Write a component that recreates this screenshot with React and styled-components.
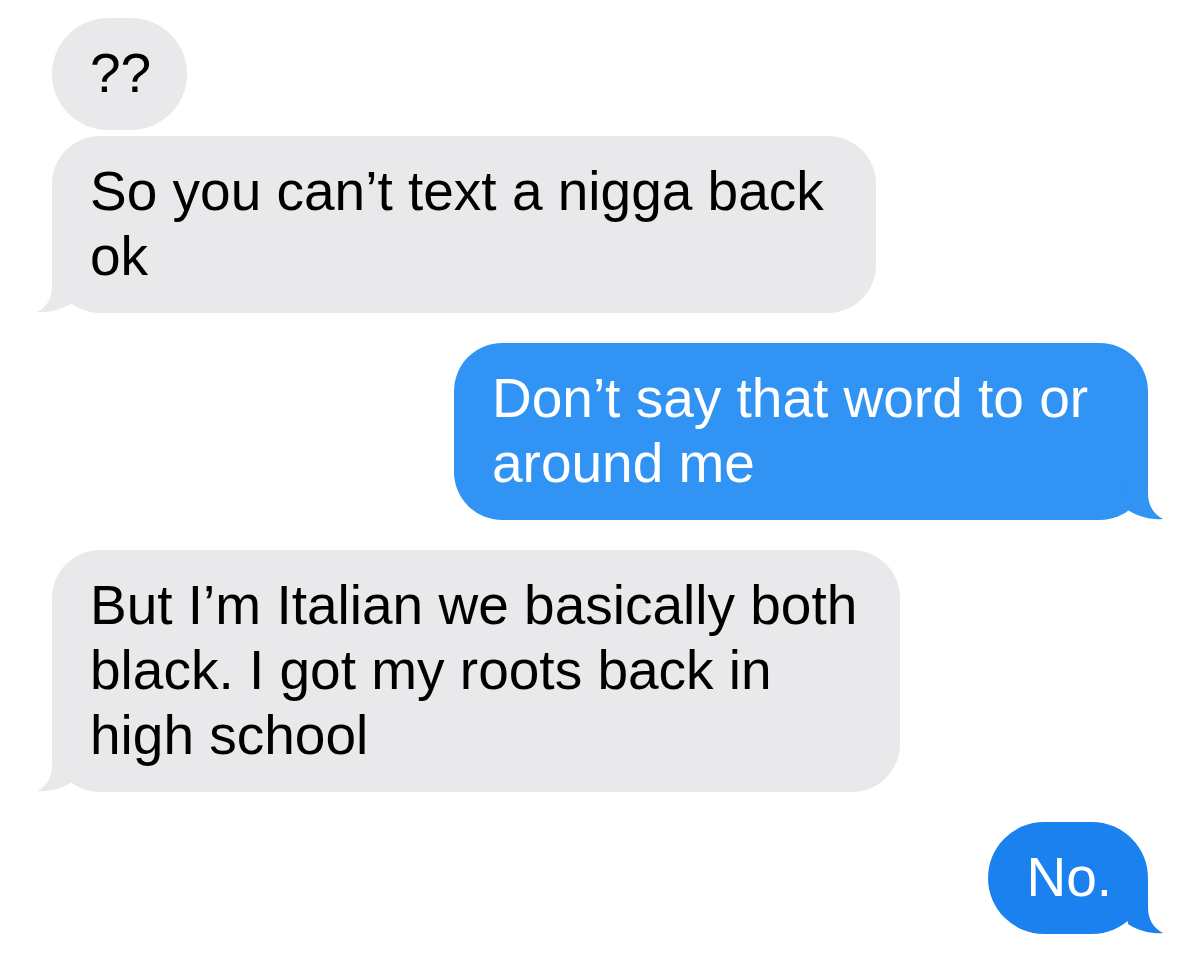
import React from "react";
import styled, { createGlobalStyle } from "styled-components";

const Global = createGlobalStyle`
  html, body {
    margin: 0;
    padding: 0;
    background: #ffffff;
  }
  body {
    font-family: "Liberation Sans", Arial, Helvetica, sans-serif;
  }
`;

const Chat = styled.div`
  width: 1200px;
  min-height: 961px;
  box-sizing: border-box;
  padding: 18px 52px 26px;
  display: flex;
  flex-direction: column;
  gap: 30px;
  background: #ffffff;
`;

const Group = styled.div`
  display: flex;
  flex-direction: column;
  gap: 6px;
  align-items: ${(p) => (p.$out ? "flex-end" : "flex-start")};
`;

const Bubble = styled.div`
  position: relative;
  box-sizing: border-box;
  width: fit-content;
  max-width: ${(p) => (p.$max ? `${p.$max}px` : "none")};
  padding: 23px ${(p) => (p.$round ? "36px" : "38px")} 24px 38px;
  border-radius: ${(p) => (p.$round ? "56px" : "48px")};
  font-size: 55px;
  line-height: 65px;
  color: ${(p) => (p.$out ? "#ffffff" : "#000000")};
  background: ${(p) => p.$bg};
`;

const TailSvg = styled.svg`
  position: absolute;
  bottom: 0;
  width: 40px;
  height: 55px;
  ${(p) => (p.$out ? "right: -15px;" : "left: -15px;")}
`;

const Tail = ({ out, color }) => (
  <TailSvg $out={out} viewBox="0 0 40 55" aria-hidden="true">
    {out ? (
      <path
        d="M25 0 L25 28 C25 40 30 49 40 54 C28 55.5 14 51 5 45 L0 0 Z"
        fill={color}
      />
    ) : (
      <path
        d="M15 0 L15 28 C15 40 10 49 0 54 C12 55.5 26 51 35 45 L40 0 Z"
        fill={color}
      />
    )}
  </TailSvg>
);

const GRAY = "#e9e9eb";

const Message = ({ out, tail, max, round, color = GRAY, children }) => (
  <Bubble $out={out} $max={max} $round={round} $bg={color}>
    {children}
    {tail && <Tail out={out} color={color} />}
  </Bubble>
);

export default function App() {
  return (
    <>
      <Global />
      <Chat>
        <Group>
          <Message round>??</Message>
          <Message tail max={824}>
            So you can’t text a nigga back ok
          </Message>
        </Group>
        <Group $out>
          <Message out tail max={694} color="#3194f4">
            Don’t say that word to or around me
          </Message>
        </Group>
        <Group>
          <Message tail max={848}>
            But I’m Italian we basically both black. I got my roots back in high school
          </Message>
        </Group>
        <Group $out>
          <Message out tail round color="#1b81ef">
            No.
          </Message>
        </Group>
      </Chat>
    </>
  );
}
